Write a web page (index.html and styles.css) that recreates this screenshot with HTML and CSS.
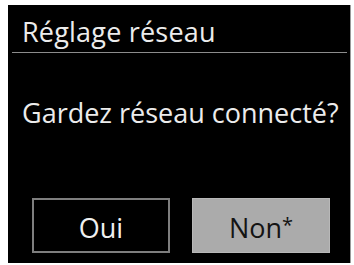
FILE: index.html
```html
<!DOCTYPE html>
<html lang="fr">
<head>
<meta charset="utf-8">
<link rel="stylesheet" href="styles.css">
</head>
<body>
<div class="screen">
  <div class="header">
    <div class="title">Réglage réseau</div>
  </div>
  <div class="rule"></div>
  <div class="question">Gardez réseau connecté?</div>
  <div class="buttons">
    <div class="btn btn-outline">Oui</div>
    <div class="btn btn-selected">Non<span class="star">*</span></div>
  </div>
</div>
</body>
</html>
```
FILE: styles.css
```css
html, body {
  margin: 0;
  padding: 0;
  background: #ffffff;
}
body {
  width: 354px;
  height: 265px;
  overflow: hidden;
  font-family: "Open Sans", "Noto Sans", sans-serif;
}
.screen {
  margin: 5px 0 0 8px;
  width: 342px;
  height: 258px;
  background: #000000;
  display: flex;
  flex-direction: column;
  box-shadow: 1px 0 0 #9a9a9a;
}
.header {
  padding: 12px 0 5px 14px;
}
.title {
  font-size: 27px;
  line-height: 30px;
  color: #ececec;
  letter-spacing: 0.2px;
}
.rule {
  height: 1px;
  margin: 0 3px 0 4px;
  background: #8c8c8c;
}
.question {
  margin-top: 45px;
  padding-left: 14px;
  font-size: 27px;
  line-height: 30px;
  color: #ececec;
  white-space: nowrap;
}
.buttons {
  margin-top: auto;
  margin-bottom: 10px;
  padding-left: 24px;
  display: flex;
  gap: 22px;
}
.btn {
  box-sizing: border-box;
  width: 138px;
  height: 55px;
  display: flex;
  align-items: center;
  justify-content: center;
  font-size: 27px;
  padding-top: 3px;
}
.btn-outline {
  border: 2px solid #7e7e7e;
  color: #f0f0f0;
}
.btn-selected {
  background: #ababab;
  border: 1px solid #b8b8b8;
  color: #141414;
}
.star {
  font-size: 20px;
  align-self: flex-start;
  margin-top: 9px;
}
```
